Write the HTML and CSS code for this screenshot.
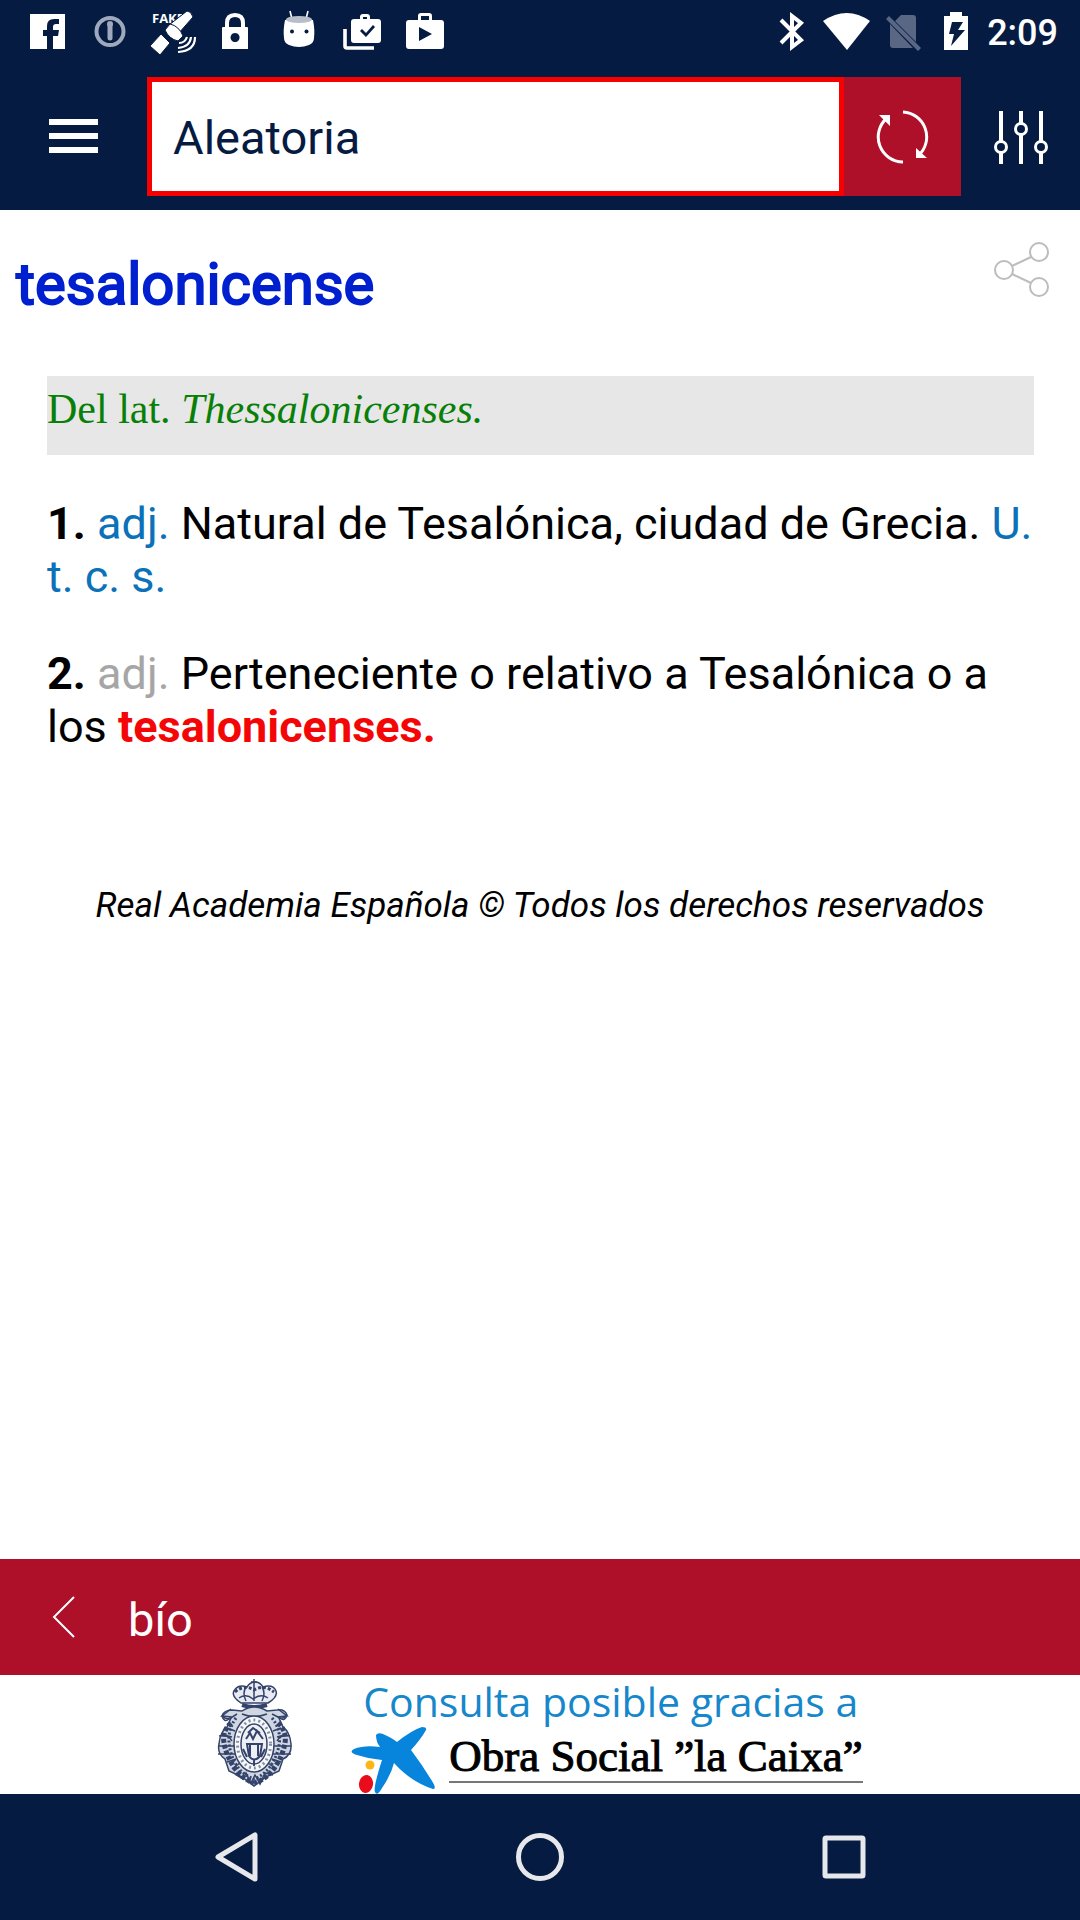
FILE: index.html
```html
<!DOCTYPE html>
<html lang="es">
<head>
<meta charset="utf-8">
<meta name="viewport" content="width=device-width, initial-scale=1">
<title>Diccionario</title>
<link rel="stylesheet" href="styles.css">
</head>
<body>
<div class="status-bar">
  <div class="status-group">
    <svg class="notice" viewBox="0 0 63 63" aria-hidden="true"><path fill="#fff" d="M14 14h35v35H37V36h5l1-6h-6v-3q0-3 3-3h3v-5h-5q-7 0-7 7v4h-4v6h4v13H14z"/></svg>
    <svg class="notice" viewBox="0 0 63 63" aria-hidden="true"><g fill="none" stroke="#9ea9bd"><circle cx="31" cy="31.500" r="13.500" stroke-width="4"/><path stroke-width="5" stroke-linecap="round" d="M31 25v13"/></g><circle cx="31" cy="24" r="3" fill="#9ea9bd"/></svg>
    <svg class="notice" viewBox="0 0 63 63" aria-hidden="true"><text class="fake" x="10" y="23">FAKE</text><g fill="#fff" stroke="#061b41" stroke-width="1"><path d="m45 11q4 0 6 6L36 34l-9-9z"/><path d="m19 34 9 9-10 12-10-9z"/><path d="m28 24q9 2 13 12l-5 5q-9-2-13-11z"/></g><path fill="none" stroke="#fff" stroke-width="2.200" d="M37 43q6 0 8-6M36 48q12-1 13-11M36 52q17-1 17-15"/></svg>
    <svg class="notice" viewBox="0 0 63 63" aria-hidden="true"><path fill="none" stroke="#fff" stroke-width="4" d="M22 30v-7q0-8 8-8t8 8v7"/><path fill="#fff" fill-rule="evenodd" d="M18 27h24q1 0 1 1v21H17V28q0-1 1-1zM30 33a4.500 4.500 0 1 0 .1 0z"/></svg>
    <svg class="notice" viewBox="0 0 63 63" aria-hidden="true"><path stroke="#fff" stroke-width="1.600" d="m22 11 2 8M40 11l-2 8"/><path fill="#fff" d="M17 20h28q2 10 1 18 0 5-5 7-10 4-20 0-5-2-5-7-1-8 1-18z"/><ellipse cx="31" cy="19.500" rx="13" ry="3.500" fill="#b8bec9"/><circle cx="24" cy="31.500" r="2" fill="#061b41"/><circle cx="38.500" cy="31.500" r="2" fill="#061b41"/></svg>
    <svg class="notice" viewBox="0 0 63 63" aria-hidden="true"><path fill="none" stroke="#fff" stroke-width="3.600" d="M14 29v17q0 2 2 2h27"/><path fill="#fff" fill-rule="evenodd" d="M23 19h6v-2q0-3 3-3h4q3 0 3 3v2h8q3 0 3 3v18q0 3-3 3H23q-3 0-3-3V22q0-3 3-3zm9 0h4v-2h-4zM29 31l6 6 9-10-2-2-7 8-4-4z"/></svg>
    <svg class="notice" viewBox="0 0 63 63" aria-hidden="true"><path fill="#fff" fill-rule="evenodd" d="M15 20h9v-4q0-3 3-3h8q3 0 3 3v4h9q3 0 3 3v23q0 3-3 3H15q-3 0-3-3V23q0-3 3-3zm12 0h8v-4h-8zM25 27v14l13-7z"/></svg>
  </div>
  <div class="status-group">
    <svg class="signal" viewBox="0 0 55 63" aria-hidden="true"><path fill="none" stroke="#fff" stroke-width="4" d="m16 20 20 20-9 7V16l9 7-20 20"/></svg>
    <svg class="signal" viewBox="0 0 55 63" aria-hidden="true"><path fill="#fff" d="M3 21q24-16 47 0L27 50z"/></svg>
    <svg class="signal" viewBox="0 0 55 63" aria-hidden="true"><path fill="#596784" d="m26 15-6 6 21 21V18q0-3-3-3zM15 24v21q0 3 3 3h20zM11 19l3-3 32 32-3 3z"/></svg>
    <svg class="signal" viewBox="0 0 55 63" aria-hidden="true"><path fill="#fff" fill-rule="evenodd" d="M14 16h6v-4h12v4h6v34H14zm8 6-3 12h5l-3 12 14-16h-7l5-8z"/></svg>
    <time class="clock">2:09</time>
  </div>
</div>

<header class="toolbar">
  <button class="icon-button menu" aria-label="Menú"><svg width="49" height="35" viewBox="0 0 49 35"><path stroke="#fff" stroke-width="6" d="M0 3h49M0 17h49M0 31h49"/></svg></button>
  <form class="search">
    <input class="search-field" type="text" aria-label="Buscar" value="Aleatoria">
    <button class="icon-button refresh" type="button" aria-label="Palabra aleatoria"><svg width="54" height="54" viewBox="0 0 54 54"><path fill="none" stroke="#fff" stroke-width="3" d="M27 2a25 25 0 0 1 16 43M27 52A25 25 0 0 1 11 8"/><path fill="#fff" d="M3 5h11v11zM40 38l11 10H40z"/></svg></button>
  </form>
  <button class="icon-button filters" aria-label="Opciones"><svg width="54" height="54" viewBox="0 0 54 54"><g fill="none" stroke="#fff" stroke-width="4"><path d="M7 1v30M7 43v11M27 1v12M27 25v29M47 1v30M47 43v11"/><circle cx="7" cy="37" r="5.500" stroke-width="3"/><circle cx="27" cy="19" r="5.500" stroke-width="3"/><circle cx="47" cy="37" r="5.500" stroke-width="3"/></g></svg></button>
</header>

<main class="article">
  <div class="heading">
    <h1 class="word">tesalonicense</h1>
    <button class="icon-button share" aria-label="Compartir"><svg width="56" height="56" viewBox="0 0 56 56"><g fill="none" stroke="#bcbcbc" stroke-width="2"><circle cx="10" cy="28" r="9"/><circle cx="45" cy="10" r="9"/><circle cx="45" cy="45" r="9"/><path d="m18 24 19-9M18 32l19 9"/></g></svg></button>
  </div>
  <div class="entry">
    <p class="origin">Del lat. <em>Thessalonicenses.</em></p>
    <p class="sense"><b>1.</b> <span class="blue">adj.</span> Natural de Tesalónica, ciudad de Grecia. <span class="blue">U. t. c. s.</span></p>
    <p class="sense"><b>2.</b> <span class="gray">adj.</span> Perteneciente o relativo a Tesalónica o a los <b class="red">tesalonicenses.</b></p>
  </div>
  <p class="rights">Real Academia Española © Todos los derechos reservados</p>
</main>

<a class="previous" href="#bio"><svg width="24" height="42" viewBox="0 0 24 42" aria-hidden="true"><path fill="none" stroke="#fff" stroke-width="2" d="M22 1 2 21l20 20"/></svg><span class="previous-word">bío</span></a>

<aside class="sponsor">
  <svg class="crest" width="76" height="112" viewBox="0 0 76 112" role="img" aria-label="Escudo de la Real Academia Española">
    <g fill="none" stroke="#34436a" stroke-width="1.500">
      <path fill="#e8ebf1" d="M24 25q-10-7-7-12 4-7 13-4 3-5 8-5t8 5q10-3 13 4 2 6-8 12z"/>
      <path stroke-width="3" stroke-dasharray="3 2" d="M18 14q9-8 19-2 10-6 20 2"/>
      <path d="M37 1v10M34 4h6M22 20q7-5 14 1 8-6 15-1M29 9q-4 6 0 14M45 9q4 6 0 14M37 9v14"/>
      <path stroke-width="4" d="M25 27q12 4 25 0"/>
      <path fill="#d0d6e2" d="M25 33q12-8 25 0l10-1q8-1 10 5-3 4-8 3l4 9q7 5 8 17 1 11-8 15l-4 12-13 6-12 9-12-9-13-6-4-12Q0 76 2 66q1-12 8-17l4-9q-5 2-9-2 2-6 10-6z"/>
      <path d="M5 38q2 7 7 3l8-5M70 37q-2 7-7 3l-8-4M14 31l-9 7 10 1M61 31l9 7-10 1M25 36q12 5 25 0"/>
      <path stroke-width="5" stroke-dasharray="4 2" d="M14 45Q5 53 7 65t10 24 20 16M61 45q9 8 7 20T58 89t-21 16"/>
      <path stroke-width="3" stroke-dasharray="2 2" d="M19 40Q8 55 14 75t23 26M55 40q12 15 5 35t-23 26"/>
      <path d="M1 68h17M1 76h18M57 68h17M56 76h18M2 58q9-2 13 5M73 58q-9-2-13 5"/>
      <ellipse cx="37" cy="66" rx="20" ry="28" fill="#f7f8fa"/>
      <ellipse cx="37" cy="66" rx="16.500" ry="24" stroke="#8791a8" stroke-dasharray="2 3" stroke-width="3"/>
      <ellipse cx="37" cy="66" rx="13" ry="20" fill="#eef0f5"/>
      <path stroke-width="2" d="M30 66h15l-2 12q-6 7-11 0zM29 61l4-6 3 6 4-8 6 8M31 55l5-5 7 5M37 82v6M33 66v12M41 66v12M26 71l4 8M48 71l-4 8"/>
      <path d="m18 96 8 5 3-6 5 10 4-8 5 9 5-11 8 2M10 50l8 3M7 57l8 2M64 50l-8 3M67 57l-7 2M10 84l9-3M15 91l8-6M64 84l-9-3M59 91l-8-6"/>
    </g>
  </svg>
  <div class="sponsor-copy">
    <p class="thanks">Consulta posible gracias a</p>
    <div class="brand">
      <svg width="84" height="67" viewBox="0 0 84 67" aria-hidden="true"><path fill="#0784dc" d="M25 8q2-3 7-1 9 4 14 8Q61 3 71 0q5 0 4 3-5 9-15 20 12 16 21 31 5 8 1 8Q60 55 43 36q-3 12-12 25-5 9-7 4-2-4 7-32-13-1-25-5-9-3-3-6 10-4 26-2-4-5-4-12z"/><circle cx="19" cy="38" r="4.500" fill="#fdb714"/><ellipse cx="15" cy="57" rx="7" ry="9" fill="#e90d1b" transform="rotate(8 15 57)"/></svg>
      <p class="brand-name">Obra Social ”la Caixa”</p>
    </div>
  </div>
</aside>

<nav class="system-nav">
  <button class="icon-button" aria-label="Atrás"><svg width="54" height="54" viewBox="0 0 54 54"><path fill="none" stroke="#e6e8ec" stroke-width="5" stroke-linejoin="round" d="M46 5v44L9 27z"/></svg></button>
  <button class="icon-button" aria-label="Inicio"><svg width="54" height="54" viewBox="0 0 54 54"><circle cx="27" cy="27" r="21.500" fill="none" stroke="#e6e8ec" stroke-width="5"/></svg></button>
  <button class="icon-button" aria-label="Recientes"><svg width="54" height="54" viewBox="0 0 54 54"><rect x="8" y="8" width="38" height="38" rx="1" fill="none" stroke="#e6e8ec" stroke-width="5"/></svg></button>
</nav>
</body>
</html>
```
FILE: styles.css
```css
* {
  box-sizing: border-box;
}

body {
  margin: 0;
  min-height: 100vh;
  display: flex;
  flex-direction: column;
  background: #fff;
  color: #000;
  font-family: Roboto, sans-serif;
}

h1,
p {
  margin: 0;
}

svg {
  display: block;
  flex: none;
}

.icon-button {
  display: flex;
  align-items: center;
  justify-content: center;
  padding: 0;
  border: 0;
  background: none;
}

.status-bar {
  display: flex;
  justify-content: space-between;
  padding: 0 22px 0 16px;
  background: #061b41;
}

.status-group {
  display: flex;
  align-items: center;
}

.notice {
  width: 63px;
  height: 63px;
}

.signal {
  width: 55px;
  height: 63px;
}

.fake {
  font: 700 13px "Open Sans", sans-serif;
  fill: #fff;
}

.clock {
  padding: 4px 0 0 2px;
  color: #fff;
  font-size: 36px;
  font-weight: 500;
  line-height: 59px;
}

.toolbar {
  display: flex;
  padding: 14px 0;
  background: #061b41;
}

.menu {
  width: 147px;
}

.search {
  flex: 1;
  display: flex;
  min-width: 0;
}

.search-field {
  flex: 1;
  min-width: 0;
  height: 119px;
  padding: 2px 21px 0;
  border: 5px solid #f80000;
  border-radius: 0;
  background: #fff;
  color: #061b41;
  font: 47px Roboto, sans-serif;
  outline: 0;
}

.refresh {
  width: 117px;
  background: #ae0f29;
}

.filters {
  width: 119px;
}

.article {
  flex: 1;
}

.heading {
  display: flex;
  justify-content: space-between;
  align-items: flex-start;
  padding: 32px 30px 0 16px;
}

.word {
  padding-top: 8px;
  color: #0020d0;
  font-size: 58px;
  font-weight: 400;
  line-height: 68px;
  -webkit-text-stroke: 2px #0020d0;
}

.entry {
  padding: 58px 46px 0 47px;
}

.origin {
  height: 79px;
  margin-bottom: 42px;
  padding-top: 9px;
  background: #e7e7e7;
  color: #088008;
  font: 42px/48px "Liberation Serif", serif;
}

.sense {
  margin-bottom: 44px;
  font-size: 45px;
  line-height: 53px;
}

.blue {
  color: #0b72b9;
}

.gray {
  color: #a6a6a6;
}

.red {
  color: #f50606;
}

.rights {
  padding-top: 85px;
  font-size: 35px;
  font-style: italic;
  line-height: 48px;
  text-align: center;
}

.previous {
  display: flex;
  align-items: center;
  gap: 52px;
  height: 116px;
  padding: 0 52px;
  background: #ae0f29;
  color: #fff;
  font-size: 47px;
  text-decoration: none;
}

.previous-word {
  padding-top: 4px;
}

.sponsor {
  display: flex;
  justify-content: center;
  gap: 58px;
  height: 119px;
}

.crest {
  margin-top: 3px;
}

.thanks {
  padding-left: 12px;
  color: #1687ca;
  font: 41px/52px "Open Sans", sans-serif;
}

.brand {
  display: flex;
  gap: 14px;
}

.brand-name {
  height: 56px;
  border-bottom: 2px solid #777;
  font: 45px/58px "Liberation Serif", serif;
  -webkit-text-stroke: 1px #000;
}

.system-nav {
  display: grid;
  grid-template-columns: repeat(3, 1fr);
  height: 126px;
  padding: 0 84px;
  background: #061b41;
}
```
